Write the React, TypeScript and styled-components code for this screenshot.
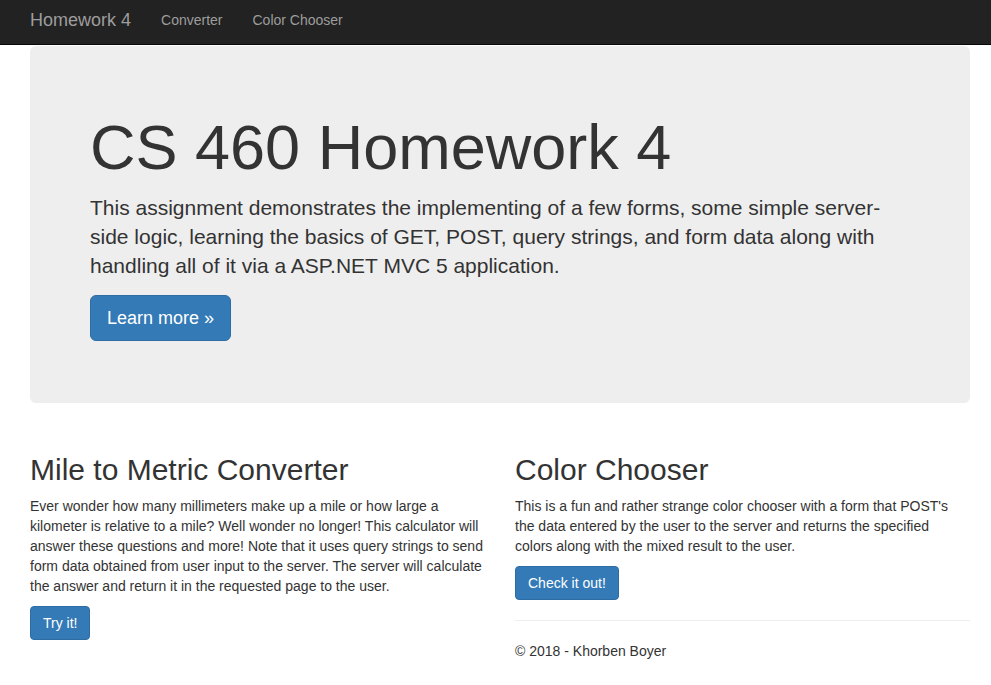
import React from "react";
import styled, { createGlobalStyle } from "styled-components";

const Global = createGlobalStyle`
  html, body { margin: 0; padding: 0; background: #fff; }
  body {
    font-family: "Liberation Sans", Arial, sans-serif;
    font-size: 14px;
    line-height: 20px;
    color: #333;
  }
  * { box-sizing: border-box; }
`;

const NavBar = styled.nav`
  height: 45px;
  background: #222;
  border-bottom: 1px solid #080808;
  display: flex;
  align-items: center;
  padding: 0 15px;
`;

const Brand = styled.a`
  font-size: 18px;
  line-height: 20px;
  color: #9d9d9d;
  padding: 0 15px;
  text-decoration: none;
  margin-top: -5px;
`;

const NavLink = styled.a`
  font-size: 14px;
  line-height: 20px;
  color: #9d9d9d;
  padding: 0 15px;
  text-decoration: none;
  margin-top: -5px;
`;

const Container = styled.div`
  padding: 0 21px 0 30px;
`;

const Jumbotron = styled.div`
  margin-top: 1px;
  background: #eee;
  border-radius: 6px;
  padding: 48px 60px 47px;
  margin-bottom: 30px;
`;

const BigTitle = styled.h1`
  font-size: 63px;
  line-height: 69px;
  font-weight: 400;
  margin: 19px 0 11px;
  color: #333;
`;

const Lead = styled.p`
  font-size: 21px;
  line-height: 29px;
  font-weight: 200;
  margin: 0 0 15px;
  max-width: 800px;
`;

const Button = styled.a<{ $large?: boolean }>`
  display: inline-block;
  background: #337ab7;
  border: 1px solid #2e6da4;
  color: #fff;
  text-decoration: none;
  border-radius: ${(p) => (p.$large ? "6px" : "4px")};
  font-size: ${(p) => (p.$large ? "18px" : "14px")};
  line-height: ${(p) => (p.$large ? "24px" : "20px")};
  padding: ${(p) => (p.$large ? "10px 16px" : "6px 12px")};
`;

const Row = styled.div`
  display: grid;
  grid-template-columns: 455px 455px;
  column-gap: 30px;
  align-items: start;
`;

const Col = styled.div``;

const SubTitle = styled.h2`
  font-size: 30px;
  line-height: 33px;
  font-weight: 400;
  margin: 20px 0 10px;
  color: #333;
`;

const Para = styled.p`
  margin: 0 0 10px;
`;

const Rule = styled.hr`
  border: 0;
  border-top: 1px solid #eee;
  margin: 20px 0;
`;

const Footer = styled.footer`
  p { margin: 0 0 10px; }
`;

export default function App() {
  return (
    <>
      <Global />
      <NavBar>
        <Brand href="#">Homework 4</Brand>
        <NavLink href="#">Converter</NavLink>
        <NavLink href="#">Color Chooser</NavLink>
      </NavBar>
      <Container>
        <Jumbotron>
          <BigTitle>CS 460 Homework 4</BigTitle>
          <Lead>
            This assignment demonstrates the implementing of a few forms, some simple server-side logic,
            learning the basics of GET, POST, query strings, and form data along with handling all of it
            via a ASP.NET MVC 5 application.
          </Lead>
          <Lead>
            <Button $large href="#">Learn more »</Button>
          </Lead>
        </Jumbotron>
        <Row>
          <Col>
            <SubTitle>Mile to Metric Converter</SubTitle>
            <Para>
              Ever wonder how many millimeters make up a mile or how large a kilometer is relative to a
              mile? Well wonder no longer! This calculator will answer these questions and more! Note that
              it uses query strings to send form data obtained from user input to the server. The server
              will calculate the answer and return it in the requested page to the user.
            </Para>
            <Para>
              <Button href="#">Try it!</Button>
            </Para>
          </Col>
          <Col>
            <SubTitle>Color Chooser</SubTitle>
            <Para>
              This is a fun and rather strange color chooser with a form that POST's the data entered by
              the user to the server and returns the specified colors along with the mixed result to the
              user.
            </Para>
            <Para>
              <Button href="#">Check it out!</Button>
            </Para>
            <Rule />
            <Footer>
              <p>© 2018 - Khorben Boyer</p>
            </Footer>
          </Col>
        </Row>
      </Container>
    </>
  );
}
